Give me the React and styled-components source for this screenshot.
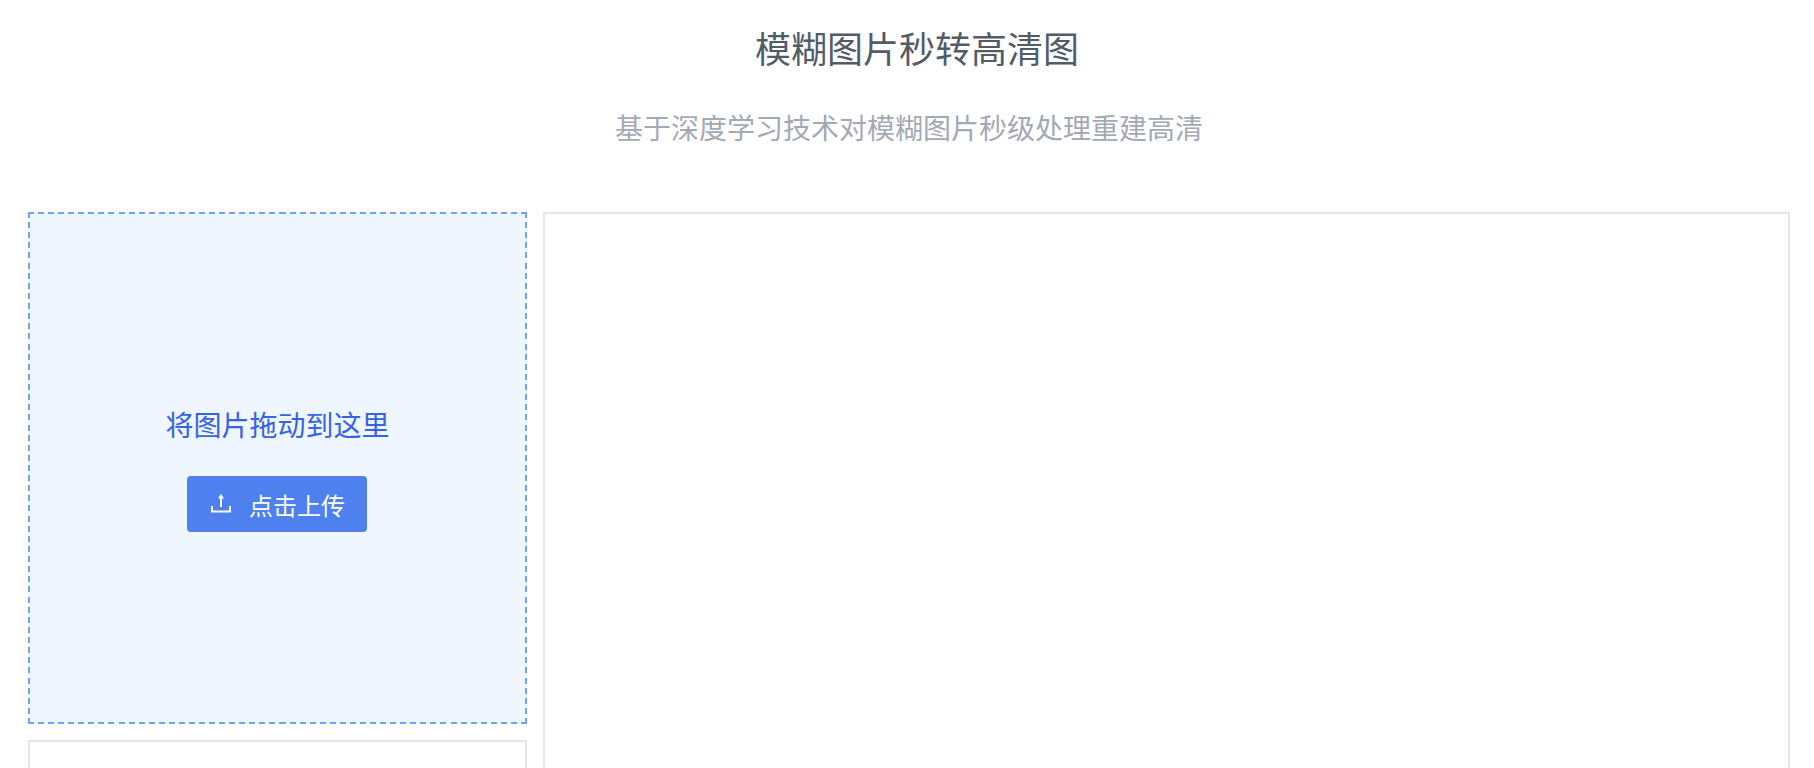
import React from "react";
import styled, { createGlobalStyle } from "styled-components";

const Global = createGlobalStyle`
  html, body { margin: 0; padding: 0; background: #fff; height: 100%; overflow: hidden; }
  #root { height: 100%; }
  * { box-sizing: border-box; }
`;

const Page = styled.div`
  height: 100vh;
  overflow: hidden;
  padding: 0 24px 0 28px;
  font-family: "Noto Sans CJK SC", "Noto Sans", sans-serif;
`;

const Header = styled.header`
  height: 212px;
  text-align: center;
  padding-top: 21px;
`;

const Title = styled.h1`
  margin: 0;
  padding-left: 16px;
  height: 52px;
  line-height: 52px;
  font-size: 36px;
  font-weight: 400;
  color: #525c69;
`;

const Subtitle = styled.p`
  margin: 34px 0 0;
  height: 40px;
  line-height: 40px;
  font-size: 28px;
  font-weight: 400;
  color: #a3a9b5;
`;

const Body = styled.main`
  display: grid;
  grid-template-columns: 499px 1fr;
  gap: 16px;
  align-items: start;
`;

const Side = styled.div`
  display: flex;
  flex-direction: column;
  gap: 16px;
`;

const dash = "#70a3f7";

const Dropzone = styled.div`
  height: 512px;
  background-color: #eff6ff;
  background-image:
    repeating-linear-gradient(90deg, ${dash} 0 6px, transparent 6px 10.06px),
    repeating-linear-gradient(90deg, ${dash} 0 6px, transparent 6px 10.06px),
    repeating-linear-gradient(180deg, ${dash} 0 6px, transparent 6px 10.12px),
    repeating-linear-gradient(180deg, ${dash} 0 6px, transparent 6px 10.12px);
  background-size: 100% 2px, 100% 2px, 2px 100%, 2px 100%;
  background-position: top left, bottom left, top left, top right;
  background-repeat: no-repeat;
  display: flex;
  flex-direction: column;
  align-items: center;
  justify-content: center;
  gap: 32px;
`;

const DropText = styled.div`
  font-size: 28px;
  line-height: 40px;
  font-weight: 400;
  color: #3563e9;
`;

const UploadButton = styled.button`
  width: 180px;
  height: 56px;
  margin-right: 1px;
  border: 0;
  border-radius: 4px;
  background: #4f80f0;
  color: #fff;
  font: inherit;
  font-size: 24px;
  font-weight: 400;
  display: flex;
  align-items: center;
  justify-content: flex-start;
  gap: 18px;
  padding: 0 0 0 24px;
`;

const Panel = styled.div`
  border: 2px solid #e5e5ea;
  background: #fff;
  height: ${(p) => p.$height}px;
`;

const UploadIcon = () => (
  <svg width="20" height="20" viewBox="0 0 20 20" fill="none" stroke="#fff" strokeWidth="2">
    <path d="M1 12v5.5h18V12" />
    <path d="M10 3v10" />
    <path d="M7 4.5 10 0l3 4.5z" fill="#fff" stroke="none" />
  </svg>
);

export default function App() {
  return (
    <Page>
      <Global />
      <Header>
        <Title>模糊图片秒转高清图</Title>
        <Subtitle>基于深度学习技术对模糊图片秒级处理重建高清</Subtitle>
      </Header>
      <Body>
        <Side>
          <Dropzone>
            <DropText>将图片拖动到这里</DropText>
            <UploadButton>
              <UploadIcon />
              点击上传
            </UploadButton>
          </Dropzone>
          <Panel $height={300} />
        </Side>
        <Panel $height={835} />
      </Body>
    </Page>
  );
}
